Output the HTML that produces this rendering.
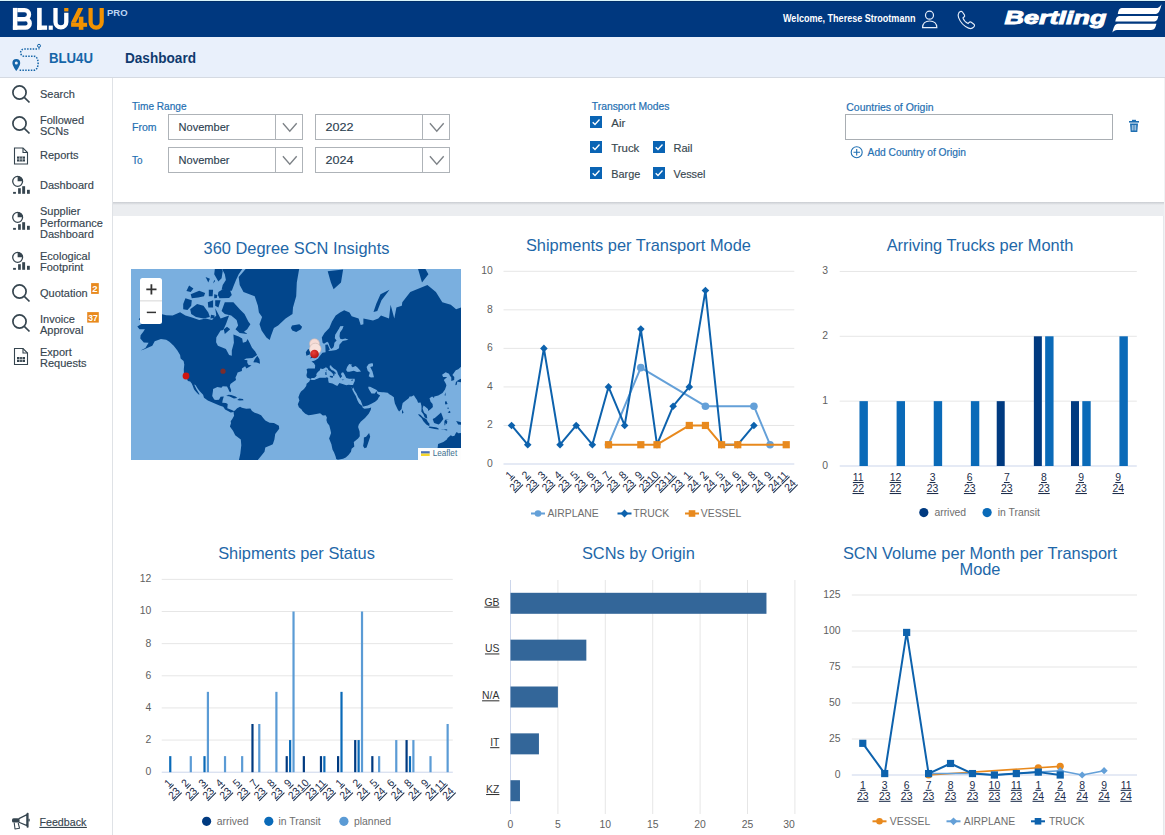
<!DOCTYPE html><html><head><meta charset="utf-8"><style>
html,body{margin:0;padding:0;width:1165px;height:835px;overflow:hidden;background:#fff}
svg{display:block;font-family:'Liberation Sans', sans-serif}
</style></head><body>
<svg width="1165" height="835" viewBox="0 0 1165 835">
<defs>
<linearGradient id="shadow" x1="0" y1="0" x2="0" y2="1"><stop offset="0" stop-color="#c9ccd1"/><stop offset="1" stop-color="#ebedf0"/></linearGradient>
<radialGradient id="redm" cx="0.4" cy="0.35" r="0.7"><stop offset="0" stop-color="#e8413a"/><stop offset="1" stop-color="#b3100d"/></radialGradient>
<clipPath id="mapclip"><rect x="131" y="269" width="330" height="191"/></clipPath>
</defs>
<rect x="0" y="0" width="1165" height="835" fill="#ffffff"/>
<rect x="0" y="0" width="1165" height="37" fill="#00387f"/>
<rect x="0" y="0" width="1165" height="1" fill="#d8f4fb"/><rect x="0" y="1" width="1165" height="1" fill="#022f68"/>
<rect x="0" y="37" width="1165" height="41" fill="#e9f0fb"/>
<rect x="0" y="77" width="1165" height="1" fill="#d5dae2"/>
<rect x="112" y="78" width="1" height="757" fill="#dfe2e6"/>
<rect x="113" y="78" width="1052" height="757" fill="#ebedf0"/>
<rect x="113" y="78" width="1051" height="124" fill="#ffffff"/>
<rect x="113" y="202" width="1051" height="3" fill="url(#shadow)"/>
<rect x="113" y="216" width="1050" height="619" fill="#ffffff"/>
<rect x="1163" y="216" width="1" height="619" fill="#e6e8eb"/><rect x="1164" y="78" width="1" height="757" fill="#f1f2f4"/>
<g fill="#ffffff"><rect x="12.9" y="7.9" width="4.5" height="21.9"/><rect x="37.1" y="7.9" width="4.6" height="21.9"/><rect x="37.1" y="25.5" width="10" height="4.3"/><rect x="48.7" y="25.6" width="4.1" height="4.2"/></g>
<g fill="none" stroke="#ffffff" stroke-width="4.3"><path d="M17.4 10.05 H24.5 A4.55 4.55 0 0 1 24.5 19.15 H17.4"/><path d="M17.4 19.15 H25.5 A4.25 4.25 0 0 1 25.5 27.65 H12.9"/><path d="M55.5 7.9 V22 A5.4 5.4 0 0 0 66.3 22 V12.8"/></g>
<g fill="#f39200"><rect x="64.2" y="8" width="4.2" height="3.4"/><path d="M78.2 7.9 H83.2 L75.9 22.8 H70.9 Z"/><rect x="71.1" y="22.8" width="16" height="4"/><rect x="78.8" y="16.7" width="4.6" height="13.1"/></g>
<path d="M90.6 7.9 V22 A5.55 5.55 0 0 0 101.7 22 V7.9" fill="none" stroke="#f39200" stroke-width="4.2"/>
<text x="107" y="15.7" font-size="9.5" font-weight="bold" fill="#bdd5f3" textLength="20.6" lengthAdjust="spacing">PRO</text>
<text x="783" y="22.3" font-size="10.5" fill="#ffffff" font-weight="bold" text-anchor="start" textLength="132.5" lengthAdjust="spacingAndGlyphs" >Welcome, Therese Strootmann</text>
<g fill="none" stroke="#e6eefa" stroke-width="1.2"><circle cx="929.5" cy="15.2" r="4"/><path d="M922.6 27.6 C922.6 23.5 925.5 21 929.7 21 C933.9 21 936.8 23.5 936.8 27.6 Z"/></g>
<path d="M959 12.5 c1.5-1.5 2.6-1.5 3.4-0.5 l2 2.8 c0.6 0.9 0.3 1.7-0.6 2.4 l-0.9 0.7 c0.8 2.3 2.8 4.6 5.2 5.6 l0.8-0.9 c0.7-0.8 1.6-1 2.4-0.4 l2.6 2 c0.9 0.7 0.8 1.8-0.3 3 c-1.3 1.4-3 1.7-5 0.9 c-4.3-1.8-8.3-6-10-10.5 c-0.7-2-0.6-3.6 0.4-5.1 z" fill="none" stroke="#e6eefa" stroke-width="1.15"/>
<text x="1004.5" y="23.5" font-size="18.5" font-weight="bold" font-style="italic" fill="#ffffff" stroke="#ffffff" stroke-width="0.9" textLength="102" lengthAdjust="spacingAndGlyphs">Bertling</text>
<path d="M1117.8 14 C1118.5 9.5 1119.5 7.9 1123 7.9 L1157.5 7.9 C1159.5 7 1160.8 5.5 1161.6 4.2 C1160.5 8 1159.5 14 1155.5 14 Z" fill="#ffffff"/>
<path d="M1115.3 21.6 C1116 17.5 1117 15.9 1120.5 15.9 L1158.4 15.9 C1157.5 19.5 1156.8 21.6 1153 21.6 Z" fill="#ffffff"/>
<path d="M1112.4 32.6 C1113.5 28 1114.5 23.8 1118 23.8 L1156.4 23.8 C1155.5 27.5 1154.8 29.9 1151 29.9 L1117 29.9 C1115 29.9 1113.5 31 1112.4 32.6 Z" fill="#ffffff"/>
<g fill="none" stroke="#1565a8" stroke-width="1.5" stroke-dasharray="1.5 1.3"><path d="M37 49 H24 C19.5 49 19.5 56.2 24 56.2 H34 C39.5 56.2 39.5 70.2 34 70.2 H19"/></g>
<path d="M16.3 59 a3.9 3.9 0 0 1 3.9 3.9 c0 3-3.9 8-3.9 8 s-3.9-5-3.9-8 a3.9 3.9 0 0 1 3.9-3.9 z" fill="#1565a8"/><circle cx="16.3" cy="62.9" r="1.5" fill="#e9f0fb"/>
<circle cx="39" cy="45.8" r="1.5" fill="none" stroke="#1565a8" stroke-width="1"/><path d="M39 47.3 V49.5" stroke="#1565a8" stroke-width="1"/>
<text x="49" y="63" font-size="14.5" fill="#1565a8" font-weight="bold" text-anchor="start" textLength="44" lengthAdjust="spacingAndGlyphs" >BLU4U</text>
<text x="125" y="63" font-size="14.5" fill="#0f3a6e" font-weight="bold" text-anchor="start" textLength="71" lengthAdjust="spacingAndGlyphs" >Dashboard</text>
<g fill="none" stroke="#36454f" stroke-width="1.7"><circle cx="19.5" cy="92.5" r="6.6"/><path d="M24.3 97.3 L29.5 102.5"/></g>
<text x="40" y="98" font-size="11" fill="#36454f" font-weight="normal" text-anchor="start" stroke="#36454f" stroke-width="0.15" >Search</text>
<g fill="none" stroke="#36454f" stroke-width="1.7"><circle cx="19.5" cy="123.5" r="6.6"/><path d="M24.3 128.3 L29.5 133.5"/></g>
<text x="40" y="124" font-size="11" fill="#36454f" font-weight="normal" text-anchor="start" stroke="#36454f" stroke-width="0.15" >Followed</text>
<text x="40" y="135" font-size="11" fill="#36454f" font-weight="normal" text-anchor="start" stroke="#36454f" stroke-width="0.15" >SCNs</text>
<g fill="none" stroke="#36454f" stroke-width="1.1"><path d="M14.5 148.0 H23 L27.5 152.5 V164.0 H14.5 Z"/><path d="M23 148.0 V152.5 H27.5"/></g>
<rect x="17" y="156.5" width="8" height="5" fill="#36454f"/>
<g stroke="#fff" stroke-width="0.6"><path d="M17 159.0 H25 M19.7 156.5 V161.5 M22.3 156.5 V161.5"/></g>
<text x="40" y="159" font-size="11" fill="#36454f" font-weight="normal" text-anchor="start" stroke="#36454f" stroke-width="0.15" >Reports</text>
<circle cx="17.65" cy="181.35" r="4.95" fill="none" stroke="#36454f" stroke-width="1.3"/>
<path d="M17.65 181.35 V176.04999999999998 A5.3 5.3 0 0 1 22.95 181.35 Z" fill="#36454f"/>
<rect x="13.1" y="191.9" width="2.8" height="1.9" fill="#36454f"/><rect x="18.1" y="188.2" width="2.7" height="5.6" fill="#36454f"/><rect x="22.2" y="186.2" width="2.9" height="7.6" fill="#36454f"/><rect x="27" y="189.8" width="2.8" height="4" fill="#36454f"/>
<text x="40" y="188.5" font-size="11" fill="#36454f" font-weight="normal" text-anchor="start" stroke="#36454f" stroke-width="0.15" >Dashboard</text>
<circle cx="17.65" cy="217.35" r="4.95" fill="none" stroke="#36454f" stroke-width="1.3"/>
<path d="M17.65 217.35 V212.04999999999998 A5.3 5.3 0 0 1 22.95 217.35 Z" fill="#36454f"/>
<rect x="13.1" y="227.9" width="2.8" height="1.9" fill="#36454f"/><rect x="18.1" y="224.2" width="2.7" height="5.6" fill="#36454f"/><rect x="22.2" y="222.2" width="2.9" height="7.6" fill="#36454f"/><rect x="27" y="225.8" width="2.8" height="4" fill="#36454f"/>
<text x="40" y="215" font-size="11" fill="#36454f" font-weight="normal" text-anchor="start" stroke="#36454f" stroke-width="0.15" >Supplier</text>
<text x="40" y="226.5" font-size="11" fill="#36454f" font-weight="normal" text-anchor="start" stroke="#36454f" stroke-width="0.15" >Performance</text>
<text x="40" y="238" font-size="11" fill="#36454f" font-weight="normal" text-anchor="start" stroke="#36454f" stroke-width="0.15" >Dashboard</text>
<circle cx="17.65" cy="257.35" r="4.95" fill="none" stroke="#36454f" stroke-width="1.3"/>
<path d="M17.65 257.35 V252.05 A5.3 5.3 0 0 1 22.95 257.35 Z" fill="#36454f"/>
<rect x="13.1" y="267.9" width="2.8" height="1.9" fill="#36454f"/><rect x="18.1" y="264.2" width="2.7" height="5.6" fill="#36454f"/><rect x="22.2" y="262.2" width="2.9" height="7.6" fill="#36454f"/><rect x="27" y="265.8" width="2.8" height="4" fill="#36454f"/>
<text x="40" y="259.5" font-size="11" fill="#36454f" font-weight="normal" text-anchor="start" stroke="#36454f" stroke-width="0.15" >Ecological</text>
<text x="40" y="271" font-size="11" fill="#36454f" font-weight="normal" text-anchor="start" stroke="#36454f" stroke-width="0.15" >Footprint</text>
<g fill="none" stroke="#36454f" stroke-width="1.7"><circle cx="19.5" cy="291.5" r="6.6"/><path d="M24.3 296.3 L29.5 301.5"/></g>
<text x="40" y="296.5" font-size="11" fill="#36454f" font-weight="normal" text-anchor="start" stroke="#36454f" stroke-width="0.15" >Quotation</text>
<g fill="none" stroke="#36454f" stroke-width="1.7"><circle cx="19.5" cy="321.5" r="6.6"/><path d="M24.3 326.3 L29.5 331.5"/></g>
<text x="40" y="322.5" font-size="11" fill="#36454f" font-weight="normal" text-anchor="start" stroke="#36454f" stroke-width="0.15" >Invoice</text>
<text x="40" y="334" font-size="11" fill="#36454f" font-weight="normal" text-anchor="start" stroke="#36454f" stroke-width="0.15" >Approval</text>
<g fill="none" stroke="#36454f" stroke-width="1.1"><path d="M14.5 348.5 H23 L27.5 353 V364.5 H14.5 Z"/><path d="M23 348.5 V353 H27.5"/></g>
<rect x="17" y="357" width="8" height="5" fill="#36454f"/>
<g stroke="#fff" stroke-width="0.6"><path d="M17 359.5 H25 M19.7 357 V362 M22.3 357 V362"/></g>
<text x="40" y="355.5" font-size="11" fill="#36454f" font-weight="normal" text-anchor="start" stroke="#36454f" stroke-width="0.15" >Export</text>
<text x="40" y="367" font-size="11" fill="#36454f" font-weight="normal" text-anchor="start" stroke="#36454f" stroke-width="0.15" >Requests</text>
<rect x="91.1" y="283.1" width="7.7" height="10.8" fill="#e8891d"/><text x="95" y="291.6" font-size="9.5" font-weight="bold" fill="#fff" text-anchor="middle">2</text>
<rect x="87.2" y="312.1" width="11.6" height="10.5" fill="#e8891d"/><text x="93" y="320.6" font-size="9.2" font-weight="bold" fill="#fff" text-anchor="middle" textLength="9.5" lengthAdjust="spacingAndGlyphs">37</text>
<rect x="12" y="818.3" width="7.2" height="4.3" rx="1.6" fill="#36454f"/>
<path d="M18.9 818.6 L27 814.6 V825.6 L18.9 822.3 Z" fill="none" stroke="#36454f" stroke-width="1.2" stroke-linejoin="round"/>
<rect x="26.6" y="812.7" width="2" height="15.1" rx="0.8" fill="#36454f"/><rect x="28.4" y="818.8" width="1.3" height="2.6" fill="#36454f"/>
<path d="M14.2 822.6 L15 829 L19.5 828.2 L18.2 823" fill="none" stroke="#36454f" stroke-width="1.1" stroke-linejoin="round"/>
<text x="39.5" y="826" font-size="10.8" fill="#36454f" font-weight="normal" text-anchor="start" textLength="46.8" lengthAdjust="spacingAndGlyphs" stroke="#36454f" stroke-width="0.15" >Feedback</text>
<rect x="39.4" y="826.9" width="47.5" height="1.1" fill="#36454f"/>
<text x="132" y="110.3" font-size="11" fill="#1f6fb2" font-weight="normal" text-anchor="start" textLength="54.5" lengthAdjust="spacingAndGlyphs" stroke="#1f6fb2" stroke-width="0.2" >Time Range</text>
<text x="132" y="131" font-size="11" fill="#1f6fb2" font-weight="normal" text-anchor="start" textLength="24.5" lengthAdjust="spacingAndGlyphs" stroke="#1f6fb2" stroke-width="0.2" >From</text>
<text x="132" y="164" font-size="11" fill="#1f6fb2" font-weight="normal" text-anchor="start" textLength="10.5" lengthAdjust="spacingAndGlyphs" stroke="#1f6fb2" stroke-width="0.2" >To</text>
<rect x="168.5" y="114.5" width="134" height="25" fill="#fff" stroke="#aeb3b8" stroke-width="1"/>
<rect x="275" y="114" width="1" height="26" fill="#aeb3b8"/>
<path d="M282.90000000000003 123.2 L289.8 131.3 L296.7 123.2" fill="none" stroke="#7d8287" stroke-width="1.35"/>
<text x="178.5" y="130.5" font-size="11" fill="#2c3e50" font-weight="normal" text-anchor="start" textLength="51" lengthAdjust="spacingAndGlyphs" stroke="#2c3e50" stroke-width="0.12" >November</text>
<rect x="315.5" y="114.5" width="134" height="25" fill="#fff" stroke="#aeb3b8" stroke-width="1"/>
<rect x="422" y="114" width="1" height="26" fill="#aeb3b8"/>
<path d="M429.90000000000003 123.2 L436.8 131.3 L443.7 123.2" fill="none" stroke="#7d8287" stroke-width="1.35"/>
<text x="325.5" y="130.5" font-size="11" fill="#2c3e50" font-weight="normal" text-anchor="start" textLength="28" lengthAdjust="spacingAndGlyphs" stroke="#2c3e50" stroke-width="0.12" >2022</text>
<rect x="168.5" y="147.5" width="134" height="25" fill="#fff" stroke="#aeb3b8" stroke-width="1"/>
<rect x="275" y="147" width="1" height="26" fill="#aeb3b8"/>
<path d="M282.90000000000003 156.2 L289.8 164.3 L296.7 156.2" fill="none" stroke="#7d8287" stroke-width="1.35"/>
<text x="178.5" y="163.5" font-size="11" fill="#2c3e50" font-weight="normal" text-anchor="start" textLength="51" lengthAdjust="spacingAndGlyphs" stroke="#2c3e50" stroke-width="0.12" >November</text>
<rect x="315.5" y="147.5" width="134" height="25" fill="#fff" stroke="#aeb3b8" stroke-width="1"/>
<rect x="422" y="147" width="1" height="26" fill="#aeb3b8"/>
<path d="M429.90000000000003 156.2 L436.8 164.3 L443.7 156.2" fill="none" stroke="#7d8287" stroke-width="1.35"/>
<text x="325.5" y="163.5" font-size="11" fill="#2c3e50" font-weight="normal" text-anchor="start" textLength="28" lengthAdjust="spacingAndGlyphs" stroke="#2c3e50" stroke-width="0.12" >2024</text>
<text x="591.8" y="110" font-size="11" fill="#1f6fb2" font-weight="normal" text-anchor="start" textLength="77.7" lengthAdjust="spacingAndGlyphs" stroke="#1f6fb2" stroke-width="0.2" >Transport Modes</text>
<rect x="590" y="116" width="12" height="12" fill="#0a64b4"/>
<path d="M592.7 122.2 L595 124.5 L599.5 119.5" fill="none" stroke="#fff" stroke-width="1.3"/>
<text x="611.3" y="127" font-size="11" fill="#37474f" font-weight="normal" text-anchor="start" textLength="14" lengthAdjust="spacingAndGlyphs" stroke="#37474f" stroke-width="0.15" >Air</text>
<rect x="590" y="141" width="12" height="12" fill="#0a64b4"/>
<path d="M592.7 147.2 L595 149.5 L599.5 144.5" fill="none" stroke="#fff" stroke-width="1.3"/>
<text x="611.3" y="152" font-size="11" fill="#37474f" font-weight="normal" text-anchor="start" textLength="28" lengthAdjust="spacingAndGlyphs" stroke="#37474f" stroke-width="0.15" >Truck</text>
<rect x="653" y="141" width="12" height="12" fill="#0a64b4"/>
<path d="M655.7 147.2 L658 149.5 L662.5 144.5" fill="none" stroke="#fff" stroke-width="1.3"/>
<text x="673.5" y="152" font-size="11" fill="#37474f" font-weight="normal" text-anchor="start" textLength="19" lengthAdjust="spacingAndGlyphs" stroke="#37474f" stroke-width="0.15" >Rail</text>
<rect x="590" y="167" width="12" height="12" fill="#0a64b4"/>
<path d="M592.7 173.2 L595 175.5 L599.5 170.5" fill="none" stroke="#fff" stroke-width="1.3"/>
<text x="611.3" y="178" font-size="11" fill="#37474f" font-weight="normal" text-anchor="start" textLength="29" lengthAdjust="spacingAndGlyphs" stroke="#37474f" stroke-width="0.15" >Barge</text>
<rect x="653" y="167" width="12" height="12" fill="#0a64b4"/>
<path d="M655.7 173.2 L658 175.5 L662.5 170.5" fill="none" stroke="#fff" stroke-width="1.3"/>
<text x="673.5" y="178" font-size="11" fill="#37474f" font-weight="normal" text-anchor="start" textLength="32" lengthAdjust="spacingAndGlyphs" stroke="#37474f" stroke-width="0.15" >Vessel</text>
<text x="846.3" y="110.5" font-size="11" fill="#1f6fb2" font-weight="normal" text-anchor="start" textLength="87.3" lengthAdjust="spacingAndGlyphs" stroke="#1f6fb2" stroke-width="0.2" >Countries of Origin</text>
<rect x="845.5" y="114.5" width="267" height="25" fill="#fff" stroke="#a9aeb3" stroke-width="1"/>
<g fill="#1f6fb2"><rect x="1129" y="121" width="10" height="1.6"/><rect x="1132" y="119.8" width="4" height="1.5"/><path d="M1130 123.5 H1138 L1137.3 132 H1130.7 Z"/></g>
<g stroke="#fff" stroke-width="0.7"><path d="M1132.3 125 V130.5 M1134 125 V130.5 M1135.7 125 V130.5"/></g>
<g fill="none" stroke="#1f6fb2" stroke-width="1.1"><circle cx="856.7" cy="152.3" r="5.5"/><path d="M853.5 152.3 H860 M856.7 149 V155.6"/></g>
<text x="867.6" y="156" font-size="11" fill="#1f6fb2" font-weight="normal" text-anchor="start" textLength="98.3" lengthAdjust="spacingAndGlyphs" stroke="#1f6fb2" stroke-width="0.2" >Add Country of Origin</text>
<text x="296.5" y="254" font-size="16.4" fill="#1e67a8" font-weight="normal" text-anchor="middle" >360 Degree SCN Insights</text>
<rect x="131" y="269" width="330" height="191" fill="#7aafdf"/>
<g clip-path="url(#mapclip)">
<path d="M186.4 291.1 L189.1 285.5 L193.4 288.4 L190.7 292.0 Z M208.8 296.3 L208.8 289.8 L213.1 289.8 L212.6 296.3 Z M214.2 298.3 L214.2 294.2 L217.4 295.0 L216.8 297.9 Z M210.4 318.6 L211.0 314.7 L214.7 315.6 L214.2 318.0 Z M208.3 282.5 L205.6 277.1 L209.9 278.8 Z M213.1 283.5 L214.2 279.9 L215.2 280.9 Z M137.3 326.6 L143.2 323.1 L138.7 319.2 L144.9 312.5 L149.7 309.6 L158.2 313.2 L166.2 315.3 L172.6 315.6 L180.1 312.2 L185.4 315.6 L192.8 317.7 L199.2 320.1 L205.6 318.6 L212.0 320.1 L216.3 315.6 L215.2 308.2 L220.6 318.6 L229.1 315.6 L225.9 324.2 L223.2 330.1 L220.6 330.6 L216.3 337.5 L216.1 342.2 L217.9 345.8 L225.9 349.0 L229.1 355.0 L231.8 355.8 L231.8 350.5 L233.9 342.8 L233.4 334.6 L238.7 336.4 L242.2 338.6 L242.9 342.8 L246.1 341.8 L247.6 339.0 L250.1 343.8 L252.0 347.7 L255.2 351.4 L257.1 355.0 L252.5 357.9 L246.1 358.4 L244.0 359.7 L247.4 360.3 L247.2 362.4 L248.3 364.7 L251.5 365.4 L246.5 368.5 L245.1 366.3 L241.9 368.5 L241.9 371.1 L237.6 372.5 L236.7 375.0 L235.5 377.6 L236.0 380.0 L232.8 382.2 L230.4 384.1 L229.8 386.5 L231.2 390.2 L230.7 392.3 L229.3 391.4 L228.3 389.0 L227.0 386.5 L222.7 386.2 L221.4 387.8 L217.4 386.9 L213.1 389.0 L212.9 391.5 L212.2 396.0 L214.2 399.5 L215.8 400.0 L219.0 399.8 L220.6 396.7 L223.8 396.6 L222.7 400.0 L222.2 402.8 L225.9 403.0 L227.7 403.9 L227.3 408.3 L231.8 410.1 L233.9 411.0 L233.4 412.1 L230.7 412.4 L228.0 411.0 L225.1 409.4 L223.2 406.7 L219.5 405.6 L213.6 403.1 L207.8 400.6 L204.0 397.8 L203.1 394.7 L200.0 391.6 L198.0 389.0 L195.5 384.9 L194.2 384.4 L196.3 389.0 L199.2 393.7 L199.3 395.0 L197.1 393.1 L194.7 390.2 L193.9 389.0 L192.8 385.9 L191.7 383.4 L190.2 381.5 L187.9 380.9 L186.6 378.1 L185.9 376.5 L183.9 372.9 L183.8 369.2 L184.3 364.4 L183.6 361.0 L180.6 358.4 L180.1 355.0 L177.4 350.5 L173.7 345.8 L169.4 341.8 L166.2 339.7 L160.9 339.0 L154.7 341.3 L152.3 345.8 L143.8 349.6 L140.6 350.5 L145.4 348.1 L148.6 342.8 L143.8 342.4 L140.3 338.6 L140.6 335.3 L143.3 331.8 L144.9 329.3 L139.5 329.3 Z M243.5 292.0 L239.7 285.0 L238.7 277.1 L249.3 264.8 L268.5 253.7 L284.5 244.9 L300.5 261.3 L296.8 282.5 L296.2 296.3 L293.0 307.5 L292.5 314.1 L285.6 318.6 L278.1 325.5 L273.9 328.1 L271.2 335.3 L269.7 340.1 L266.4 337.5 L261.6 330.6 L259.5 324.2 L262.1 317.1 L258.9 312.5 L257.9 305.8 L254.7 296.3 Z M247.7 334.1 L244.0 331.8 L247.2 329.3 L250.4 324.2 L248.3 321.5 L244.5 314.1 L239.7 309.2 L233.4 302.2 L224.8 302.2 L221.6 310.9 L224.8 314.1 L231.2 315.6 L236.6 320.1 L238.1 325.5 L235.5 329.3 L239.7 333.0 Z M209.9 317.1 L208.3 312.5 L203.5 305.8 L197.1 304.0 L190.2 309.2 L191.2 314.1 L196.0 317.1 L203.5 318.6 Z M183.2 309.2 L183.2 304.0 L185.4 298.3 L191.8 300.2 L191.2 305.8 L187.5 309.9 Z M231.8 290.7 L233.4 286.5 L236.0 279.9 L238.7 274.3 L242.9 268.1 L248.3 261.3 L251.5 253.7 L241.9 249.4 L231.2 251.2 L222.7 259.1 L221.6 268.1 L224.8 274.3 L225.9 279.9 L222.7 285.0 L221.6 289.8 Z M219.5 298.3 L229.1 297.9 L231.8 295.0 L230.2 290.7 L222.7 289.3 L218.4 292.0 L217.9 295.0 Z M218.4 281.5 L214.2 274.3 L215.2 266.2 L219.5 263.5 L222.7 271.3 L221.6 278.3 Z M191.8 298.3 L190.7 294.2 L199.2 290.7 L205.1 292.9 L204.0 296.3 L198.2 297.5 Z M213.1 307.5 L213.1 300.2 L207.8 302.2 L208.3 307.5 Z M218.4 307.5 L220.6 300.2 L215.2 300.2 L215.2 305.8 Z M224.8 334.1 L230.2 329.3 L227.0 326.8 L223.8 329.3 Z M257.3 355.7 L259.5 359.2 L260.0 363.7 L256.8 362.4 L253.3 362.3 L254.7 359.2 Z M299.4 324.2 L302.1 326.8 L301.0 329.3 L296.2 332.0 L292.3 330.6 L290.9 328.1 L292.0 325.5 Z M313.3 342.6 L314.6 344.4 L313.3 347.7 L314.9 349.6 L316.6 352.3 L318.3 353.4 L318.0 356.0 L316.7 357.0 L312.8 357.5 L310.4 358.4 L311.2 355.7 L312.2 354.1 L311.7 352.7 L312.8 350.5 L311.2 349.6 L310.1 346.8 L311.2 342.8 Z M308.7 349.0 L310.1 351.4 L309.8 354.6 L306.4 355.8 L305.8 352.3 L307.7 349.6 Z M310.5 378.9 L307.0 377.6 L306.4 375.3 L307.2 372.1 L306.6 369.2 L308.0 368.5 L312.8 368.6 L314.9 368.6 L315.2 365.5 L314.0 363.2 L311.5 361.6 L314.9 360.5 L316.5 359.5 L318.1 358.4 L319.2 356.7 L322.4 352.7 L325.6 352.3 L325.3 344.8 L327.7 344.4 L329.8 349.6 L328.2 351.1 L331.4 350.7 L336.2 350.0 L339.0 348.3 L339.4 344.8 L342.7 340.9 L348.5 339.7 L345.3 338.6 L342.1 339.2 L340.2 338.8 L339.5 336.2 L340.0 332.5 L342.5 329.1 L343.5 326.0 L340.2 326.3 L339.1 328.6 L336.8 332.2 L335.2 334.8 L334.8 338.2 L336.6 340.5 L334.4 342.8 L334.0 345.8 L333.3 347.5 L331.4 348.9 L330.0 347.3 L328.4 342.8 L327.2 341.8 L324.0 343.8 L322.6 342.8 L321.8 337.5 L324.5 333.0 L329.3 328.1 L332.0 321.5 L335.7 315.6 L340.0 312.5 L344.2 310.2 L349.5 312.5 L351.7 316.2 L358.6 318.6 L360.7 325.0 L363.4 324.2 L363.4 318.6 L373.0 320.6 L378.3 318.6 L381.0 315.6 L389.0 318.6 L390.6 304.7 L394.3 318.6 L396.4 307.5 L401.8 305.8 L402.3 302.2 L410.3 292.0 L427.4 285.0 L435.9 292.0 L442.3 302.2 L450.8 304.7 L456.1 309.2 L465.7 305.8 L476.4 307.5 L476.4 339.7 L468.9 341.8 L462.5 350.5 L467.2 352.7 L466.3 358.4 L463.9 364.0 L458.3 369.2 L455.8 370.2 L452.4 374.9 L454.3 376.9 L454.2 380.1 L451.3 380.9 L451.3 377.6 L449.8 375.6 L449.0 373.8 L445.7 372.2 L442.1 374.7 L443.1 376.9 L447.2 377.1 L443.8 380.1 L446.0 384.1 L446.4 385.6 L445.0 389.6 L442.5 393.1 L438.3 395.4 L434.3 396.6 L434.0 398.0 L432.1 396.5 L429.5 398.3 L430.6 401.7 L432.6 403.9 L432.9 407.0 L430.8 409.0 L428.2 410.9 L427.9 409.0 L425.6 406.9 L423.6 405.6 L422.6 408.3 L423.4 411.0 L424.2 412.8 L426.7 414.8 L427.3 418.6 L424.7 417.4 L423.4 414.2 L421.3 411.5 L421.5 409.4 L421.5 406.1 L420.6 402.5 L418.1 402.8 L417.0 400.0 L415.1 397.2 L413.9 395.2 L411.4 396.4 L409.6 396.5 L408.7 398.3 L405.5 400.8 L402.7 403.0 L402.0 406.1 L401.6 409.1 L399.1 411.4 L397.7 409.4 L396.2 406.3 L394.9 403.4 L394.1 399.5 L393.9 397.2 L391.1 395.2 L389.3 394.3 L387.7 392.8 L383.7 392.2 L382.1 392.3 L377.8 391.7 L376.7 390.1 L370.1 386.7 L368.2 386.7 L368.5 388.4 L369.8 390.8 L371.5 393.4 L373.0 393.6 L374.8 393.5 L376.3 391.6 L376.6 391.0 L377.3 393.7 L380.2 395.5 L378.5 397.8 L377.5 399.7 L375.1 401.7 L371.4 403.7 L367.7 405.6 L363.4 406.6 L362.7 406.1 L362.0 403.9 L360.7 400.6 L358.2 397.2 L356.5 393.5 L354.3 390.2 L353.7 387.2 L353.0 389.2 L351.3 386.7 L350.9 384.9 L353.0 384.9 L353.8 383.1 L354.8 380.9 L354.7 378.7 L352.2 378.7 L349.1 378.7 L346.3 378.0 L345.4 376.2 L344.4 374.2 L343.1 372.2 L341.6 372.8 L341.0 374.2 L342.1 376.2 L340.3 378.3 L339.0 375.8 L338.0 374.2 L337.3 371.7 L336.2 370.1 L333.8 368.5 L331.4 366.3 L331.0 365.2 L329.7 365.8 L329.8 367.8 L331.6 370.0 L333.7 370.8 L335.7 372.7 L336.2 373.4 L334.1 373.8 L334.7 375.0 L333.2 376.2 L333.3 374.2 L332.4 373.2 L331.0 371.8 L328.4 370.1 L327.5 368.2 L325.9 367.2 L324.4 368.2 L322.8 369.1 L320.3 368.6 L319.9 370.2 L317.8 372.0 L316.2 374.2 L316.7 375.3 L315.8 376.8 L314.2 378.0 L311.8 378.0 Z M310.2 379.2 L309.3 381.5 L306.6 383.7 L306.2 386.1 L304.0 389.0 L301.0 391.4 L299.7 393.7 L298.4 397.2 L299.4 400.6 L297.8 404.3 L298.9 407.2 L301.6 409.4 L302.4 411.0 L305.3 413.7 L308.5 415.3 L312.2 414.8 L317.6 413.7 L320.1 413.3 L322.9 415.5 L325.6 415.3 L326.9 417.4 L326.4 420.1 L327.2 422.8 L329.3 425.4 L330.4 429.7 L331.1 433.0 L329.1 438.5 L331.4 444.2 L332.5 449.4 L334.1 452.4 L335.7 456.8 L336.2 459.1 L337.8 459.7 L343.1 458.7 L345.8 457.4 L348.5 454.9 L351.0 451.8 L351.6 448.8 L354.3 446.5 L353.8 441.9 L358.1 438.5 L359.8 436.3 L359.6 431.4 L358.1 427.0 L358.8 424.4 L360.7 421.7 L365.0 418.0 L368.7 413.7 L370.7 409.9 L371.2 407.4 L368.7 408.3 L364.5 408.8 L362.7 407.8 L362.3 406.1 L359.1 403.4 L357.5 400.6 L355.8 396.0 L354.4 393.7 L352.6 390.2 L351.3 386.7 L350.9 384.9 L348.5 384.7 L346.3 385.3 L341.0 383.4 L339.4 383.1 L337.3 385.9 L335.7 385.3 L332.5 383.4 L328.8 382.8 L328.2 380.2 L328.2 377.9 L326.9 377.2 L325.6 377.7 L319.7 377.7 L316.0 379.2 L314.4 380.0 L311.7 380.0 Z M240.1 406.8 L237.1 408.3 L235.0 410.5 L233.9 411.0 L233.6 412.6 L234.1 415.8 L232.3 419.0 L230.7 421.2 L231.0 423.3 L229.9 426.5 L233.0 430.8 L235.2 435.2 L240.8 439.6 L241.3 445.3 L240.3 453.7 L238.1 464.0 L237.6 473.9 L250.4 473.9 L254.7 464.6 L256.0 461.7 L258.0 459.8 L261.1 456.1 L264.5 451.8 L265.3 447.6 L270.7 445.3 L272.8 444.2 L274.4 439.6 L275.2 434.1 L279.2 428.7 L278.9 425.8 L273.9 423.1 L269.6 422.8 L265.3 420.6 L263.2 418.0 L261.1 415.3 L257.9 413.7 L254.7 412.8 L252.0 411.0 L250.4 408.6 L246.1 408.8 L241.9 407.8 Z M228.6 394.7 L231.2 394.9 L235.5 396.6 L237.4 398.1 L233.9 398.4 L229.1 396.3 L226.1 396.0 Z M239.2 398.6 L242.9 398.9 L243.6 400.3 L239.7 400.5 L237.2 400.1 Z M327.7 271.3 L343.1 269.4 L341.0 282.5 L333.6 289.3 L330.9 282.5 Z M389.5 289.8 L380.5 294.2 L376.2 304.0 L373.5 311.9 L377.3 310.9 L381.5 300.2 Z M422.0 282.5 L417.8 268.1 L423.1 264.8 L428.4 274.3 Z M461.5 298.3 L465.7 294.2 L472.1 292.0 L467.9 298.3 Z M466.8 371.4 L467.9 374.9 L466.8 377.6 L465.7 380.2 L462.5 380.9 L460.9 382.2 L456.1 381.5 L459.3 379.6 L462.0 378.3 L463.1 376.9 L465.2 375.6 L465.7 372.8 Z M456.0 381.6 L455.3 385.3 L456.7 384.7 L457.2 382.2 Z M467.9 365.5 L471.6 369.2 L468.9 370.7 L465.7 371.4 L466.3 369.2 Z M468.4 351.4 L469.5 356.7 L467.9 364.7 L467.7 361.6 L467.4 355.0 Z M446.0 392.2 L445.3 396.0 L444.5 394.9 Z M445.6 401.1 L446.4 401.3 L447.6 404.1 L445.4 404.4 L444.9 402.8 Z M449.9 410.7 L450.5 412.4 L449.6 413.0 L447.6 412.4 L448.8 411.4 Z M448.3 407.6 L448.9 408.2 L448.1 408.9 L447.4 408.5 L447.4 407.8 Z M441.0 412.6 L442.3 415.8 L443.4 419.0 L440.2 423.3 L438.6 424.4 L434.8 423.3 L434.0 422.8 L432.7 419.0 L434.8 418.0 L438.0 415.3 Z M418.1 414.1 L420.4 414.8 L423.1 417.4 L426.3 419.0 L428.1 422.2 L429.5 423.8 L429.3 426.3 L426.3 424.4 L423.4 421.2 L421.5 418.0 L419.0 415.8 Z M429.5 426.5 L433.8 427.0 L436.6 427.5 L438.6 428.4 L438.6 429.4 L434.8 428.9 L430.0 428.1 L428.6 427.4 Z M449.0 419.2 L445.2 419.8 L444.4 421.3 L444.4 425.2 L445.2 425.2 L445.6 423.0 L446.9 424.3 L447.3 421.3 L446.1 420.0 L448.2 419.6 Z M456.1 421.0 L459.3 421.7 L463.6 423.3 L467.3 423.0 L472.1 423.3 L472.1 429.7 L468.4 429.7 L464.1 428.7 L461.5 424.9 L458.1 424.4 L457.2 422.8 Z M441.3 429.2 L443.8 429.6 L446.4 429.3 L447.6 430.0 L446.7 430.5 L444.1 429.7 L441.6 429.6 Z M468.4 431.7 L467.3 435.7 L466.3 439.1 L464.7 437.9 L461.5 436.3 L462.3 433.0 L458.3 433.2 L456.7 432.1 L455.6 433.5 L454.5 435.7 L452.4 436.3 L450.8 435.2 L447.6 437.9 L446.8 439.6 L443.4 441.9 L438.1 443.9 L437.5 448.8 L439.8 456.1 L439.1 459.3 L442.2 460.0 L448.2 458.4 L456.1 455.8 L459.3 456.8 L461.2 460.0 L463.7 459.7 L466.3 464.0 L472.1 464.6 L472.1 431.9 Z M369.1 433.0 L370.2 436.8 L366.6 447.6 L364.5 448.2 L363.1 445.9 L363.8 441.9 L363.9 437.4 L366.1 436.8 Z M402.0 409.6 L402.0 413.7 L403.7 412.6 Z M326.3 371.8 L326.6 374.9 L325.5 374.9 L325.2 372.4 Z M326.5 369.2 L326.3 371.5 L325.7 370.7 Z M329.8 375.8 L333.1 376.0 L332.5 378.0 L329.8 376.9 Z M341.6 379.6 L344.5 379.8 L342.6 380.2 Z M353.3 379.4 L352.5 380.7 L350.9 380.6 L351.6 379.8 Z" fill="#02468c"/>
<path d="M347.4 371.8 L346.1 370.0 L347.1 367.0 L349.2 364.0 L352.2 364.7 L351.1 365.8 L352.7 367.2 L355.4 366.0 L357.0 367.0 L359.1 369.2 L361.0 371.4 L357.0 372.1 L353.8 370.7 L349.5 371.8 Z M371.4 363.2 L368.7 364.0 L366.6 367.0 L367.7 370.7 L369.8 372.8 L368.7 376.2 L370.9 377.6 L374.0 377.2 L373.0 373.5 L372.5 371.4 L370.3 367.0 L373.0 366.3 L373.0 363.5 Z" fill="#7aafdf"/>
<circle cx="314.5" cy="343.8" r="5" fill="#f6dcd6" stroke="#c9b3ae" stroke-width="0.6"/>
<circle cx="315.3" cy="349" r="5.8" fill="#f8e2dc" stroke="#cdb8b2" stroke-width="0.6"/>
<circle cx="314.5" cy="354" r="4.3" fill="url(#redm)"/>
<circle cx="186" cy="376" r="3.4" fill="#d0140f"/>
<circle cx="223" cy="371.2" r="2.6" fill="#7a2d2d"/>
</g>
<rect x="140" y="278" width="22" height="46" rx="2.5" fill="#ffffff"/>
<rect x="140" y="300.5" width="22" height="0.8" fill="#cccccc"/>
<path d="M146.3 289.4 H156.5 M151.4 284.3 V294.5" stroke="#333" stroke-width="1.8"/>
<path d="M146.8 312.4 H156" stroke="#333" stroke-width="1.5"/>
<rect x="418" y="448" width="43" height="12" fill="#fdfdfd"/>
<rect x="421" y="451.2" width="8.7" height="2.4" fill="#4c70b6"/><rect x="421" y="453.6" width="8.7" height="2.4" fill="#f5d62d"/>
<text x="432.7" y="456.3" font-size="8.2" fill="#3d6f8f" font-weight="normal" text-anchor="start" textLength="24.5" lengthAdjust="spacingAndGlyphs" >Leaflet</text>
<text x="638.4" y="250.5" font-size="16.4" fill="#1e67a8" font-weight="normal" text-anchor="middle" >Shipments per Transport Mode</text>
<text x="492.8" y="466.90" font-size="10.4" fill="#5f5f5f" font-weight="normal" text-anchor="end" >0</text>
<rect x="503.5" y="424.96" width="290.79999999999995" height="1" fill="#e6e6e6"/>
<text x="492.8" y="428.36" font-size="10.4" fill="#5f5f5f" font-weight="normal" text-anchor="end" >2</text>
<rect x="503.5" y="386.42" width="290.79999999999995" height="1" fill="#e6e6e6"/>
<text x="492.8" y="389.82" font-size="10.4" fill="#5f5f5f" font-weight="normal" text-anchor="end" >4</text>
<rect x="503.5" y="347.88" width="290.79999999999995" height="1" fill="#e6e6e6"/>
<text x="492.8" y="351.28" font-size="10.4" fill="#5f5f5f" font-weight="normal" text-anchor="end" >6</text>
<rect x="503.5" y="309.34" width="290.79999999999995" height="1" fill="#e6e6e6"/>
<text x="492.8" y="312.74" font-size="10.4" fill="#5f5f5f" font-weight="normal" text-anchor="end" >8</text>
<rect x="503.5" y="270.80" width="290.79999999999995" height="1" fill="#e6e6e6"/>
<text x="492.8" y="274.20" font-size="10.4" fill="#5f5f5f" font-weight="normal" text-anchor="end" >10</text>
<rect x="503.5" y="463.50" width="290.79999999999995" height="1" fill="#ccd6eb"/>
<path d="M608.51 444.73 L640.82 367.65 L705.44 406.19 L753.91 406.19 L770.07 444.73" fill="none" stroke="#64a0d8" stroke-width="2" stroke-linejoin="round" stroke-linecap="round"/>
<circle cx="608.51" cy="444.73" r="3.8" fill="#64a0d8"/>
<circle cx="640.82" cy="367.65" r="3.8" fill="#64a0d8"/>
<circle cx="705.44" cy="406.19" r="3.8" fill="#64a0d8"/>
<circle cx="753.91" cy="406.19" r="3.8" fill="#64a0d8"/>
<circle cx="770.07" cy="444.73" r="3.8" fill="#64a0d8"/>
<path d="M511.58 425.46 L527.73 444.73 L543.89 348.38 L560.04 444.73 L576.20 425.46 L592.36 444.73 L608.51 386.92 L624.67 425.46 L640.82 329.11 L656.98 444.73 L673.13 406.19 L689.29 386.92 L705.44 290.57 L721.60 444.73 L737.76 444.73 L753.91 425.46" fill="none" stroke="#0d62ad" stroke-width="2" stroke-linejoin="round" stroke-linecap="round"/>
<path d="M511.58 421.66 L515.38 425.46 L511.58 429.26 L507.78 425.46 Z" fill="#0d62ad"/>
<path d="M527.73 440.93 L531.53 444.73 L527.73 448.53 L523.93 444.73 Z" fill="#0d62ad"/>
<path d="M543.89 344.58 L547.69 348.38 L543.89 352.18 L540.09 348.38 Z" fill="#0d62ad"/>
<path d="M560.04 440.93 L563.84 444.73 L560.04 448.53 L556.24 444.73 Z" fill="#0d62ad"/>
<path d="M576.20 421.66 L580.00 425.46 L576.20 429.26 L572.40 425.46 Z" fill="#0d62ad"/>
<path d="M592.36 440.93 L596.16 444.73 L592.36 448.53 L588.56 444.73 Z" fill="#0d62ad"/>
<path d="M608.51 383.12 L612.31 386.92 L608.51 390.72 L604.71 386.92 Z" fill="#0d62ad"/>
<path d="M624.67 421.66 L628.47 425.46 L624.67 429.26 L620.87 425.46 Z" fill="#0d62ad"/>
<path d="M640.82 325.31 L644.62 329.11 L640.82 332.91 L637.02 329.11 Z" fill="#0d62ad"/>
<path d="M656.98 440.93 L660.78 444.73 L656.98 448.53 L653.18 444.73 Z" fill="#0d62ad"/>
<path d="M673.13 402.39 L676.93 406.19 L673.13 409.99 L669.33 406.19 Z" fill="#0d62ad"/>
<path d="M689.29 383.12 L693.09 386.92 L689.29 390.72 L685.49 386.92 Z" fill="#0d62ad"/>
<path d="M705.44 286.77 L709.24 290.57 L705.44 294.37 L701.64 290.57 Z" fill="#0d62ad"/>
<path d="M721.60 440.93 L725.40 444.73 L721.60 448.53 L717.80 444.73 Z" fill="#0d62ad"/>
<path d="M737.76 440.93 L741.56 444.73 L737.76 448.53 L733.96 444.73 Z" fill="#0d62ad"/>
<path d="M753.91 421.66 L757.71 425.46 L753.91 429.26 L750.11 425.46 Z" fill="#0d62ad"/>
<path d="M608.51 444.73 L640.82 444.73 L656.98 444.73 L689.29 425.46 L705.44 425.46 L721.60 444.73 L737.76 444.73 L786.22 444.73" fill="none" stroke="#e8891d" stroke-width="2" stroke-linejoin="round" stroke-linecap="round"/>
<rect x="604.91" y="441.13" width="7.2" height="7.2" fill="#e8891d"/>
<rect x="637.22" y="441.13" width="7.2" height="7.2" fill="#e8891d"/>
<rect x="653.38" y="441.13" width="7.2" height="7.2" fill="#e8891d"/>
<rect x="685.69" y="421.86" width="7.2" height="7.2" fill="#e8891d"/>
<rect x="701.84" y="421.86" width="7.2" height="7.2" fill="#e8891d"/>
<rect x="718.00" y="441.13" width="7.2" height="7.2" fill="#e8891d"/>
<rect x="734.16" y="441.13" width="7.2" height="7.2" fill="#e8891d"/>
<rect x="782.62" y="441.13" width="7.2" height="7.2" fill="#e8891d"/>
<g transform="translate(513.88,475.50) rotate(-45)" font-size="10.4" fill="#1c2d4a" text-anchor="end" style="text-decoration:underline"><text x="0" y="0">1</text><text x="0" y="11.4">23</text></g>
<g transform="translate(530.03,475.50) rotate(-45)" font-size="10.4" fill="#1c2d4a" text-anchor="end" style="text-decoration:underline"><text x="0" y="0">2</text><text x="0" y="11.4">23</text></g>
<g transform="translate(546.19,475.50) rotate(-45)" font-size="10.4" fill="#1c2d4a" text-anchor="end" style="text-decoration:underline"><text x="0" y="0">3</text><text x="0" y="11.4">23</text></g>
<g transform="translate(562.34,475.50) rotate(-45)" font-size="10.4" fill="#1c2d4a" text-anchor="end" style="text-decoration:underline"><text x="0" y="0">4</text><text x="0" y="11.4">23</text></g>
<g transform="translate(578.50,475.50) rotate(-45)" font-size="10.4" fill="#1c2d4a" text-anchor="end" style="text-decoration:underline"><text x="0" y="0">5</text><text x="0" y="11.4">23</text></g>
<g transform="translate(594.66,475.50) rotate(-45)" font-size="10.4" fill="#1c2d4a" text-anchor="end" style="text-decoration:underline"><text x="0" y="0">6</text><text x="0" y="11.4">23</text></g>
<g transform="translate(610.81,475.50) rotate(-45)" font-size="10.4" fill="#1c2d4a" text-anchor="end" style="text-decoration:underline"><text x="0" y="0">7</text><text x="0" y="11.4">23</text></g>
<g transform="translate(626.97,475.50) rotate(-45)" font-size="10.4" fill="#1c2d4a" text-anchor="end" style="text-decoration:underline"><text x="0" y="0">8</text><text x="0" y="11.4">23</text></g>
<g transform="translate(643.12,475.50) rotate(-45)" font-size="10.4" fill="#1c2d4a" text-anchor="end" style="text-decoration:underline"><text x="0" y="0">9</text><text x="0" y="11.4">23</text></g>
<g transform="translate(659.28,475.50) rotate(-45)" font-size="10.4" fill="#1c2d4a" text-anchor="end" style="text-decoration:underline"><text x="0" y="0">10</text><text x="0" y="11.4">23</text></g>
<g transform="translate(675.43,475.50) rotate(-45)" font-size="10.4" fill="#1c2d4a" text-anchor="end" style="text-decoration:underline"><text x="0" y="0">11</text><text x="0" y="11.4">23</text></g>
<g transform="translate(691.59,475.50) rotate(-45)" font-size="10.4" fill="#1c2d4a" text-anchor="end" style="text-decoration:underline"><text x="0" y="0">1</text><text x="0" y="11.4">24</text></g>
<g transform="translate(707.74,475.50) rotate(-45)" font-size="10.4" fill="#1c2d4a" text-anchor="end" style="text-decoration:underline"><text x="0" y="0">2</text><text x="0" y="11.4">24</text></g>
<g transform="translate(723.90,475.50) rotate(-45)" font-size="10.4" fill="#1c2d4a" text-anchor="end" style="text-decoration:underline"><text x="0" y="0">5</text><text x="0" y="11.4">24</text></g>
<g transform="translate(740.06,475.50) rotate(-45)" font-size="10.4" fill="#1c2d4a" text-anchor="end" style="text-decoration:underline"><text x="0" y="0">6</text><text x="0" y="11.4">24</text></g>
<g transform="translate(756.21,475.50) rotate(-45)" font-size="10.4" fill="#1c2d4a" text-anchor="end" style="text-decoration:underline"><text x="0" y="0">8</text><text x="0" y="11.4">24</text></g>
<g transform="translate(772.37,475.50) rotate(-45)" font-size="10.4" fill="#1c2d4a" text-anchor="end" style="text-decoration:underline"><text x="0" y="0">9</text><text x="0" y="11.4">24</text></g>
<g transform="translate(788.52,475.50) rotate(-45)" font-size="10.4" fill="#1c2d4a" text-anchor="end" style="text-decoration:underline"><text x="0" y="0">11</text><text x="0" y="11.4">24</text></g>
<rect x="531" y="512.5" width="14" height="2" fill="#64a0d8"/>
<circle cx="538.00" cy="513.50" r="3.3" fill="#64a0d8"/>
<text x="547.4" y="517.2" font-size="10.4" fill="#6e6e6e" font-weight="normal" text-anchor="start" >AIRPLANE</text>
<rect x="617.5" y="512.5" width="14" height="2" fill="#0d62ad"/>
<path d="M624.50 509.60 L628.40 513.50 L624.50 517.40 L620.60 513.50 Z" fill="#0d62ad"/>
<text x="633.3" y="517.2" font-size="10.4" fill="#6e6e6e" font-weight="normal" text-anchor="start" >TRUCK</text>
<rect x="685" y="512.5" width="14" height="2" fill="#e8891d"/>
<rect x="688.70" y="510.20" width="6.6" height="6.6" fill="#e8891d"/>
<text x="700.8" y="517.2" font-size="10.4" fill="#6e6e6e" font-weight="normal" text-anchor="start" >VESSEL</text>
<text x="980" y="250.5" font-size="16.4" fill="#1e67a8" font-weight="normal" text-anchor="middle" >Arriving Trucks per Month</text>
<text x="828" y="468.90" font-size="10.4" fill="#5f5f5f" font-weight="normal" text-anchor="end" >0</text>
<rect x="839.7" y="400.65" width="297.0999999999999" height="1" fill="#e6e6e6"/>
<text x="828" y="404.05" font-size="10.4" fill="#5f5f5f" font-weight="normal" text-anchor="end" >1</text>
<rect x="839.7" y="335.80" width="297.0999999999999" height="1" fill="#e6e6e6"/>
<text x="828" y="339.20" font-size="10.4" fill="#5f5f5f" font-weight="normal" text-anchor="end" >2</text>
<rect x="839.7" y="270.95" width="297.0999999999999" height="1" fill="#e6e6e6"/>
<text x="828" y="274.35" font-size="10.4" fill="#5f5f5f" font-weight="normal" text-anchor="end" >3</text>
<rect x="839.7" y="465.50" width="297.0999999999999" height="1" fill="#ccd6eb"/>
<rect x="859.47" y="401.15" width="8.4" height="64.85" fill="#0a6ab8"/>
<g font-size="10.4" fill="#1c2d4a" text-anchor="middle" style="text-decoration:underline"><text x="858.27" y="481">11</text><text x="858.27" y="492">22</text></g>
<rect x="896.61" y="401.15" width="8.4" height="64.85" fill="#0a6ab8"/>
<g font-size="10.4" fill="#1c2d4a" text-anchor="middle" style="text-decoration:underline"><text x="895.41" y="481">12</text><text x="895.41" y="492">22</text></g>
<rect x="933.74" y="401.15" width="8.4" height="64.85" fill="#0a6ab8"/>
<g font-size="10.4" fill="#1c2d4a" text-anchor="middle" style="text-decoration:underline"><text x="932.54" y="481">3</text><text x="932.54" y="492">23</text></g>
<rect x="970.88" y="401.15" width="8.4" height="64.85" fill="#0a6ab8"/>
<g font-size="10.4" fill="#1c2d4a" text-anchor="middle" style="text-decoration:underline"><text x="969.68" y="481">6</text><text x="969.68" y="492">23</text></g>
<rect x="996.72" y="401.15" width="8" height="64.85" fill="#003a80"/>
<g font-size="10.4" fill="#1c2d4a" text-anchor="middle" style="text-decoration:underline"><text x="1006.82" y="481">7</text><text x="1006.82" y="492">23</text></g>
<rect x="1033.86" y="336.30" width="8" height="129.70" fill="#003a80"/>
<rect x="1045.16" y="336.30" width="8.4" height="129.70" fill="#0a6ab8"/>
<g font-size="10.4" fill="#1c2d4a" text-anchor="middle" style="text-decoration:underline"><text x="1043.96" y="481">8</text><text x="1043.96" y="492">23</text></g>
<rect x="1070.99" y="401.15" width="8" height="64.85" fill="#003a80"/>
<rect x="1082.29" y="401.15" width="8.4" height="64.85" fill="#0a6ab8"/>
<g font-size="10.4" fill="#1c2d4a" text-anchor="middle" style="text-decoration:underline"><text x="1081.09" y="481">9</text><text x="1081.09" y="492">23</text></g>
<rect x="1119.43" y="336.30" width="8.4" height="129.70" fill="#0a6ab8"/>
<g font-size="10.4" fill="#1c2d4a" text-anchor="middle" style="text-decoration:underline"><text x="1118.23" y="481">9</text><text x="1118.23" y="492">24</text></g>
<circle cx="923.8" cy="512.6" r="4.6" fill="#003a80"/>
<text x="934.4" y="516.3000000000001" font-size="10.4" fill="#6e6e6e" font-weight="normal" text-anchor="start" >arrived</text>
<circle cx="987.1" cy="512.6" r="4.6" fill="#0a6ab8"/>
<text x="997.8" y="516.3000000000001" font-size="10.4" fill="#6e6e6e" font-weight="normal" text-anchor="start" >in Transit</text>
<text x="296.5" y="558.7" font-size="16.4" fill="#1e67a8" font-weight="normal" text-anchor="middle" >Shipments per Status</text>
<text x="151.2" y="775.10" font-size="10.4" fill="#5f5f5f" font-weight="normal" text-anchor="end" >0</text>
<rect x="161.7" y="739.56" width="291.1" height="1" fill="#e6e6e6"/>
<text x="151.2" y="742.96" font-size="10.4" fill="#5f5f5f" font-weight="normal" text-anchor="end" >2</text>
<rect x="161.7" y="707.42" width="291.1" height="1" fill="#e6e6e6"/>
<text x="151.2" y="710.82" font-size="10.4" fill="#5f5f5f" font-weight="normal" text-anchor="end" >4</text>
<rect x="161.7" y="675.28" width="291.1" height="1" fill="#e6e6e6"/>
<text x="151.2" y="678.68" font-size="10.4" fill="#5f5f5f" font-weight="normal" text-anchor="end" >6</text>
<rect x="161.7" y="643.14" width="291.1" height="1" fill="#e6e6e6"/>
<text x="151.2" y="646.54" font-size="10.4" fill="#5f5f5f" font-weight="normal" text-anchor="end" >8</text>
<rect x="161.7" y="611.00" width="291.1" height="1" fill="#e6e6e6"/>
<text x="151.2" y="614.40" font-size="10.4" fill="#5f5f5f" font-weight="normal" text-anchor="end" >10</text>
<rect x="161.7" y="578.86" width="291.1" height="1" fill="#e6e6e6"/>
<text x="151.2" y="582.26" font-size="10.4" fill="#5f5f5f" font-weight="normal" text-anchor="end" >12</text>
<rect x="161.7" y="771.70" width="291.1" height="1" fill="#ccd6eb"/>
<rect x="169.16" y="756.13" width="2.2" height="16.07" fill="#0a6ab8"/>
<g transform="translate(172.56,783.50) rotate(-45)" font-size="10.4" fill="#1c2d4a" text-anchor="end" style="text-decoration:underline"><text x="0" y="0">1</text><text x="0" y="11.4">23</text></g>
<rect x="189.69" y="756.13" width="2.2" height="16.07" fill="#5b9bd5"/>
<g transform="translate(189.69,783.50) rotate(-45)" font-size="10.4" fill="#1c2d4a" text-anchor="end" style="text-decoration:underline"><text x="0" y="0">2</text><text x="0" y="11.4">23</text></g>
<rect x="203.41" y="756.13" width="2.2" height="16.07" fill="#0a6ab8"/>
<rect x="206.81" y="691.85" width="2.2" height="80.35" fill="#5b9bd5"/>
<g transform="translate(206.81,783.50) rotate(-45)" font-size="10.4" fill="#1c2d4a" text-anchor="end" style="text-decoration:underline"><text x="0" y="0">3</text><text x="0" y="11.4">23</text></g>
<rect x="223.93" y="756.13" width="2.2" height="16.07" fill="#5b9bd5"/>
<g transform="translate(223.93,783.50) rotate(-45)" font-size="10.4" fill="#1c2d4a" text-anchor="end" style="text-decoration:underline"><text x="0" y="0">4</text><text x="0" y="11.4">23</text></g>
<rect x="241.06" y="756.13" width="2.2" height="16.07" fill="#5b9bd5"/>
<g transform="translate(241.06,783.50) rotate(-45)" font-size="10.4" fill="#1c2d4a" text-anchor="end" style="text-decoration:underline"><text x="0" y="0">5</text><text x="0" y="11.4">23</text></g>
<rect x="251.38" y="723.99" width="2.2" height="48.21" fill="#003a80"/>
<rect x="258.18" y="723.99" width="2.2" height="48.21" fill="#5b9bd5"/>
<g transform="translate(258.18,783.50) rotate(-45)" font-size="10.4" fill="#1c2d4a" text-anchor="end" style="text-decoration:underline"><text x="0" y="0">7</text><text x="0" y="11.4">23</text></g>
<rect x="275.30" y="691.85" width="2.2" height="80.35" fill="#5b9bd5"/>
<g transform="translate(275.30,783.50) rotate(-45)" font-size="10.4" fill="#1c2d4a" text-anchor="end" style="text-decoration:underline"><text x="0" y="0">8</text><text x="0" y="11.4">23</text></g>
<rect x="285.63" y="756.13" width="2.2" height="16.07" fill="#003a80"/>
<rect x="289.03" y="740.06" width="2.2" height="32.14" fill="#0a6ab8"/>
<rect x="292.43" y="611.50" width="2.2" height="160.70" fill="#5b9bd5"/>
<g transform="translate(292.43,783.50) rotate(-45)" font-size="10.4" fill="#1c2d4a" text-anchor="end" style="text-decoration:underline"><text x="0" y="0">9</text><text x="0" y="11.4">23</text></g>
<rect x="302.75" y="756.13" width="2.2" height="16.07" fill="#003a80"/>
<g transform="translate(309.55,783.50) rotate(-45)" font-size="10.4" fill="#1c2d4a" text-anchor="end" style="text-decoration:underline"><text x="0" y="0">10</text><text x="0" y="11.4">23</text></g>
<rect x="319.87" y="756.13" width="2.2" height="16.07" fill="#003a80"/>
<rect x="323.27" y="756.13" width="2.2" height="16.07" fill="#0a6ab8"/>
<g transform="translate(326.67,783.50) rotate(-45)" font-size="10.4" fill="#1c2d4a" text-anchor="end" style="text-decoration:underline"><text x="0" y="0">11</text><text x="0" y="11.4">23</text></g>
<rect x="337.00" y="756.13" width="2.2" height="16.07" fill="#003a80"/>
<rect x="340.40" y="691.85" width="2.2" height="80.35" fill="#0a6ab8"/>
<g transform="translate(343.80,783.50) rotate(-45)" font-size="10.4" fill="#1c2d4a" text-anchor="end" style="text-decoration:underline"><text x="0" y="0">1</text><text x="0" y="11.4">24</text></g>
<rect x="354.12" y="740.06" width="2.2" height="32.14" fill="#003a80"/>
<rect x="357.52" y="740.06" width="2.2" height="32.14" fill="#0a6ab8"/>
<rect x="360.92" y="611.50" width="2.2" height="160.70" fill="#5b9bd5"/>
<g transform="translate(360.92,783.50) rotate(-45)" font-size="10.4" fill="#1c2d4a" text-anchor="end" style="text-decoration:underline"><text x="0" y="0">2</text><text x="0" y="11.4">24</text></g>
<rect x="371.24" y="756.13" width="2.2" height="16.07" fill="#003a80"/>
<rect x="378.04" y="756.13" width="2.2" height="16.07" fill="#5b9bd5"/>
<g transform="translate(378.04,783.50) rotate(-45)" font-size="10.4" fill="#1c2d4a" text-anchor="end" style="text-decoration:underline"><text x="0" y="0">5</text><text x="0" y="11.4">24</text></g>
<rect x="395.17" y="740.06" width="2.2" height="32.14" fill="#5b9bd5"/>
<g transform="translate(395.17,783.50) rotate(-45)" font-size="10.4" fill="#1c2d4a" text-anchor="end" style="text-decoration:underline"><text x="0" y="0">6</text><text x="0" y="11.4">24</text></g>
<rect x="405.49" y="740.06" width="2.2" height="32.14" fill="#003a80"/>
<rect x="408.89" y="756.13" width="2.2" height="16.07" fill="#0a6ab8"/>
<rect x="412.29" y="740.06" width="2.2" height="32.14" fill="#5b9bd5"/>
<g transform="translate(412.29,783.50) rotate(-45)" font-size="10.4" fill="#1c2d4a" text-anchor="end" style="text-decoration:underline"><text x="0" y="0">8</text><text x="0" y="11.4">24</text></g>
<rect x="429.41" y="756.13" width="2.2" height="16.07" fill="#5b9bd5"/>
<g transform="translate(429.41,783.50) rotate(-45)" font-size="10.4" fill="#1c2d4a" text-anchor="end" style="text-decoration:underline"><text x="0" y="0">9</text><text x="0" y="11.4">24</text></g>
<rect x="446.54" y="723.99" width="2.2" height="48.21" fill="#5b9bd5"/>
<g transform="translate(446.54,783.50) rotate(-45)" font-size="10.4" fill="#1c2d4a" text-anchor="end" style="text-decoration:underline"><text x="0" y="0">11</text><text x="0" y="11.4">24</text></g>
<circle cx="206.6" cy="821.3" r="4.6" fill="#003a80"/>
<text x="216.7" y="825.0" font-size="10.4" fill="#6e6e6e" font-weight="normal" text-anchor="start" >arrived</text>
<circle cx="268.8" cy="821.3" r="4.6" fill="#0a6ab8"/>
<text x="278.5" y="825.0" font-size="10.4" fill="#6e6e6e" font-weight="normal" text-anchor="start" >in Transit</text>
<circle cx="343.9" cy="821.3" r="4.6" fill="#5b9bd5"/>
<text x="354" y="825.0" font-size="10.4" fill="#6e6e6e" font-weight="normal" text-anchor="start" >planned</text>
<text x="638.4" y="559" font-size="16.4" fill="#1e67a8" font-weight="normal" text-anchor="middle" >SCNs by Origin</text>
<rect x="557.40" y="580" width="1" height="234" fill="#e6e6e6"/>
<rect x="604.80" y="580" width="1" height="234" fill="#e6e6e6"/>
<rect x="652.20" y="580" width="1" height="234" fill="#e6e6e6"/>
<rect x="699.60" y="580" width="1" height="234" fill="#e6e6e6"/>
<rect x="747.00" y="580" width="1" height="234" fill="#e6e6e6"/>
<rect x="794.40" y="580" width="1" height="234" fill="#e6e6e6"/>
<rect x="510.0" y="580" width="1" height="234" fill="#ccd6eb"/>
<text x="510.50" y="828" font-size="10.4" fill="#5f5f5f" font-weight="normal" text-anchor="middle" >0</text>
<text x="557.90" y="828" font-size="10.4" fill="#5f5f5f" font-weight="normal" text-anchor="middle" >5</text>
<text x="605.30" y="828" font-size="10.4" fill="#5f5f5f" font-weight="normal" text-anchor="middle" >10</text>
<text x="652.70" y="828" font-size="10.4" fill="#5f5f5f" font-weight="normal" text-anchor="middle" >15</text>
<text x="700.10" y="828" font-size="10.4" fill="#5f5f5f" font-weight="normal" text-anchor="middle" >20</text>
<text x="747.50" y="828" font-size="10.4" fill="#5f5f5f" font-weight="normal" text-anchor="middle" >25</text>
<text x="794.8" y="828" font-size="10.4" fill="#5f5f5f" font-weight="normal" text-anchor="end" >30</text>
<rect x="510.5" y="592.8" width="255.96" height="21" fill="#336699"/>
<text x="499.4" y="605.60" font-size="10.4" fill="#333333" text-anchor="end" style="text-decoration:underline">GB</text>
<rect x="510.5" y="639.65" width="75.84" height="21" fill="#336699"/>
<text x="499.4" y="652.45" font-size="10.4" fill="#333333" text-anchor="end" style="text-decoration:underline">US</text>
<rect x="510.5" y="686.5" width="47.40" height="21" fill="#336699"/>
<text x="499.4" y="699.30" font-size="10.4" fill="#333333" text-anchor="end" style="text-decoration:underline">N/A</text>
<rect x="510.5" y="733.3499999999999" width="28.44" height="21" fill="#336699"/>
<text x="499.4" y="746.15" font-size="10.4" fill="#333333" text-anchor="end" style="text-decoration:underline">IT</text>
<rect x="510.5" y="780.1999999999999" width="9.48" height="21" fill="#336699"/>
<text x="499.4" y="793.00" font-size="10.4" fill="#333333" text-anchor="end" style="text-decoration:underline">KZ</text>
<text x="980" y="558.7" font-size="16.4" fill="#1e67a8" font-weight="normal" text-anchor="middle" >SCN Volume per Month per Transport</text>
<text x="980" y="574.5" font-size="16.4" fill="#1e67a8" font-weight="normal" text-anchor="middle" >Mode</text>
<text x="840.6" y="777.90" font-size="10.4" fill="#5f5f5f" font-weight="normal" text-anchor="end" >0</text>
<rect x="851.8" y="738.50" width="285.20000000000005" height="1" fill="#e6e6e6"/>
<text x="840.6" y="741.90" font-size="10.4" fill="#5f5f5f" font-weight="normal" text-anchor="end" >25</text>
<rect x="851.8" y="702.50" width="285.20000000000005" height="1" fill="#e6e6e6"/>
<text x="840.6" y="705.90" font-size="10.4" fill="#5f5f5f" font-weight="normal" text-anchor="end" >50</text>
<rect x="851.8" y="666.50" width="285.20000000000005" height="1" fill="#e6e6e6"/>
<text x="840.6" y="669.90" font-size="10.4" fill="#5f5f5f" font-weight="normal" text-anchor="end" >75</text>
<rect x="851.8" y="630.50" width="285.20000000000005" height="1" fill="#e6e6e6"/>
<text x="840.6" y="633.90" font-size="10.4" fill="#5f5f5f" font-weight="normal" text-anchor="end" >100</text>
<rect x="851.8" y="594.50" width="285.20000000000005" height="1" fill="#e6e6e6"/>
<text x="840.6" y="597.90" font-size="10.4" fill="#5f5f5f" font-weight="normal" text-anchor="end" >125</text>
<rect x="851.8" y="774.50" width="285.20000000000005" height="1" fill="#ccd6eb"/>
<path d="M928.58 775.00 L1038.28 767.80 L1060.22 766.36" fill="none" stroke="#e8891d" stroke-width="1.6" stroke-linejoin="round" stroke-linecap="round"/>
<circle cx="928.58" cy="775.00" r="3.6" fill="#e8891d"/>
<circle cx="1038.28" cy="767.80" r="3.6" fill="#e8891d"/>
<circle cx="1060.22" cy="766.36" r="3.6" fill="#e8891d"/>
<path d="M928.58 773.56 L972.46 773.56 L994.40 775.00 L1016.34 773.56 L1038.28 772.12 L1060.22 770.68 L1082.15 775.00 L1104.09 770.68" fill="none" stroke="#64a0d8" stroke-width="1.6" stroke-linejoin="round" stroke-linecap="round"/>
<path d="M928.58 769.96 L932.18 773.56 L928.58 777.16 L924.98 773.56 Z" fill="#64a0d8"/>
<path d="M972.46 769.96 L976.06 773.56 L972.46 777.16 L968.86 773.56 Z" fill="#64a0d8"/>
<path d="M994.40 771.40 L998.00 775.00 L994.40 778.60 L990.80 775.00 Z" fill="#64a0d8"/>
<path d="M1016.34 769.96 L1019.94 773.56 L1016.34 777.16 L1012.74 773.56 Z" fill="#64a0d8"/>
<path d="M1038.28 768.52 L1041.88 772.12 L1038.28 775.72 L1034.68 772.12 Z" fill="#64a0d8"/>
<path d="M1060.22 767.08 L1063.82 770.68 L1060.22 774.28 L1056.62 770.68 Z" fill="#64a0d8"/>
<path d="M1082.15 771.40 L1085.75 775.00 L1082.15 778.60 L1078.55 775.00 Z" fill="#64a0d8"/>
<path d="M1104.09 767.08 L1107.69 770.68 L1104.09 774.28 L1100.49 770.68 Z" fill="#64a0d8"/>
<path d="M862.77 743.32 L884.71 773.56 L906.65 632.44 L928.58 773.56 L950.52 763.48 L972.46 773.56 L994.40 775.00 L1016.34 773.56 L1038.28 772.12 L1060.22 775.00" fill="none" stroke="#0d62ad" stroke-width="2" stroke-linejoin="round" stroke-linecap="round"/>
<rect x="859.17" y="739.72" width="7.2" height="7.2" fill="#0d62ad"/>
<rect x="881.11" y="769.96" width="7.2" height="7.2" fill="#0d62ad"/>
<rect x="903.05" y="628.84" width="7.2" height="7.2" fill="#0d62ad"/>
<rect x="924.98" y="769.96" width="7.2" height="7.2" fill="#0d62ad"/>
<rect x="946.92" y="759.88" width="7.2" height="7.2" fill="#0d62ad"/>
<rect x="968.86" y="769.96" width="7.2" height="7.2" fill="#0d62ad"/>
<rect x="990.80" y="771.40" width="7.2" height="7.2" fill="#0d62ad"/>
<rect x="1012.74" y="769.96" width="7.2" height="7.2" fill="#0d62ad"/>
<rect x="1034.68" y="768.52" width="7.2" height="7.2" fill="#0d62ad"/>
<rect x="1056.62" y="771.40" width="7.2" height="7.2" fill="#0d62ad"/>
<g font-size="10.4" fill="#1c2d4a" text-anchor="middle" style="text-decoration:underline"><text x="862.77" y="788.8">1</text><text x="862.77" y="799.8">23</text></g>
<g font-size="10.4" fill="#1c2d4a" text-anchor="middle" style="text-decoration:underline"><text x="884.71" y="788.8">3</text><text x="884.71" y="799.8">23</text></g>
<g font-size="10.4" fill="#1c2d4a" text-anchor="middle" style="text-decoration:underline"><text x="906.65" y="788.8">6</text><text x="906.65" y="799.8">23</text></g>
<g font-size="10.4" fill="#1c2d4a" text-anchor="middle" style="text-decoration:underline"><text x="928.58" y="788.8">7</text><text x="928.58" y="799.8">23</text></g>
<g font-size="10.4" fill="#1c2d4a" text-anchor="middle" style="text-decoration:underline"><text x="950.52" y="788.8">8</text><text x="950.52" y="799.8">23</text></g>
<g font-size="10.4" fill="#1c2d4a" text-anchor="middle" style="text-decoration:underline"><text x="972.46" y="788.8">9</text><text x="972.46" y="799.8">23</text></g>
<g font-size="10.4" fill="#1c2d4a" text-anchor="middle" style="text-decoration:underline"><text x="994.40" y="788.8">10</text><text x="994.40" y="799.8">23</text></g>
<g font-size="10.4" fill="#1c2d4a" text-anchor="middle" style="text-decoration:underline"><text x="1016.34" y="788.8">11</text><text x="1016.34" y="799.8">23</text></g>
<g font-size="10.4" fill="#1c2d4a" text-anchor="middle" style="text-decoration:underline"><text x="1038.28" y="788.8">1</text><text x="1038.28" y="799.8">24</text></g>
<g font-size="10.4" fill="#1c2d4a" text-anchor="middle" style="text-decoration:underline"><text x="1060.22" y="788.8">2</text><text x="1060.22" y="799.8">24</text></g>
<g font-size="10.4" fill="#1c2d4a" text-anchor="middle" style="text-decoration:underline"><text x="1082.15" y="788.8">8</text><text x="1082.15" y="799.8">24</text></g>
<g font-size="10.4" fill="#1c2d4a" text-anchor="middle" style="text-decoration:underline"><text x="1104.09" y="788.8">9</text><text x="1104.09" y="799.8">24</text></g>
<g font-size="10.4" fill="#1c2d4a" text-anchor="middle" style="text-decoration:underline"><text x="1126.03" y="788.8">11</text><text x="1126.03" y="799.8">24</text></g>
<rect x="872.5" y="820.3" width="14" height="2" fill="#e8891d"/>
<circle cx="879.50" cy="821.30" r="3.3" fill="#e8891d"/>
<text x="889.8" y="825.0" font-size="10.4" fill="#6e6e6e" font-weight="normal" text-anchor="start" >VESSEL</text>
<rect x="946.5" y="820.3" width="14" height="2" fill="#64a0d8"/>
<path d="M953.50 817.40 L957.40 821.30 L953.50 825.20 L949.60 821.30 Z" fill="#64a0d8"/>
<text x="963.8" y="825.0" font-size="10.4" fill="#6e6e6e" font-weight="normal" text-anchor="start" >AIRPLANE</text>
<rect x="1031" y="820.3" width="14" height="2" fill="#0d62ad"/>
<rect x="1034.70" y="818.00" width="6.6" height="6.6" fill="#0d62ad"/>
<text x="1048.9" y="825.0" font-size="10.4" fill="#6e6e6e" font-weight="normal" text-anchor="start" >TRUCK</text>
</svg></body></html>
